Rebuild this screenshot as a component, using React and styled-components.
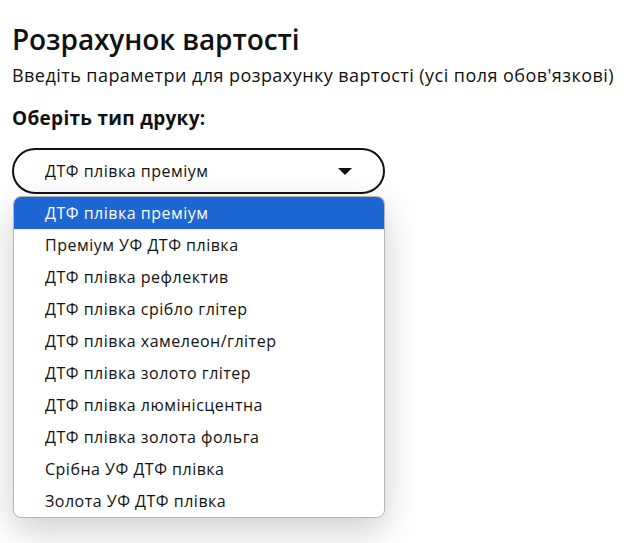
import React, { useState } from "react";
import styled, { createGlobalStyle } from "styled-components";

const GlobalStyle = createGlobalStyle`
  body {
    margin: 0;
    background: #fff;
    font-family: "Open Sans", "Lato", sans-serif;
    color: #111;
  }
`;

const options = [
  "ДТФ плівка преміум",
  "Преміум УФ ДТФ плівка",
  "ДТФ плівка рефлектив",
  "ДТФ плівка срібло глітер",
  "ДТФ плівка хамелеон/глітер",
  "ДТФ плівка золото глітер",
  "ДТФ плівка люмінісцентна",
  "ДТФ плівка золота фольга",
  "Срібна УФ ДТФ плівка",
  "Золота УФ ДТФ плівка",
];

function App() {
  const [selected, setSelected] = useState(0);

  return (
    <Page>
      <GlobalStyle />
      <Title>Розрахунок вартості</Title>
      <Subtitle>Введіть параметри для розрахунку вартості (усі поля обов'язкові)</Subtitle>
      <Label>Оберіть тип друку:</Label>
      <SelectWrap>
        <SelectBox>
          <span>{options[selected]}</span>
          <Caret />
        </SelectBox>
        <Menu>
          {options.map((o, i) => (
            <Option key={o} active={i === selected} onClick={() => setSelected(i)}>
              {o}
            </Option>
          ))}
        </Menu>
      </SelectWrap>
    </Page>
  );
}

const Page = styled.div`
  padding: 22px 12px 0 12px;
  height: 543px;
  box-sizing: border-box;
  overflow: hidden;
`;

const Title = styled.h1`
  margin: 0;
  font-size: 28px;
  font-weight: 600;
  line-height: 34px;
  letter-spacing: -0.1px;
`;

const Subtitle = styled.p`
  margin: 7px 0 0 0;
  font-size: 18px;
  line-height: 25px;
  letter-spacing: 0.45px;
  white-space: nowrap;
`;

const Label = styled.div`
  margin-top: 17px;
  font-size: 19px;
  font-weight: 700;
  line-height: 26px;
  letter-spacing: 0.3px;
`;

const SelectWrap = styled.div`
  position: relative;
  width: 373px;
  margin-top: 17px;
`;

const SelectBox = styled.div`
  height: 46px;
  box-sizing: border-box;
  border: 2px solid #111;
  border-radius: 23px;
  display: flex;
  align-items: center;
  justify-content: space-between;
  padding: 0 31px 0 31px;
  font-size: 16px;
  letter-spacing: 0.5px;
`;

const Caret = styled.span`
  width: 0;
  height: 0;
  border-left: 7px solid transparent;
  border-right: 7px solid transparent;
  border-top: 7px solid #111;
`;

const Menu = styled.ul`
  position: absolute;
  top: 48px;
  left: 1px;
  right: 0;
  margin: 0;
  padding: 0;
  list-style: none;
  background: #fff;
  border: 1px solid #b5b5b5;
  border-radius: 8px;
  overflow: hidden;
  box-shadow: 0 12px 36px rgba(0, 0, 0, 0.2);
`;

const Option = styled.li`
  height: 32px;
  display: flex;
  align-items: center;
  padding-left: 31px;
  font-size: 16px;
  letter-spacing: 0.5px;
  color: ${(p) => (p.active ? "#fff" : "#111")};
  background: ${(p) => (p.active ? "#1d66d3" : "transparent")};
  cursor: default;
`;

export default App;
